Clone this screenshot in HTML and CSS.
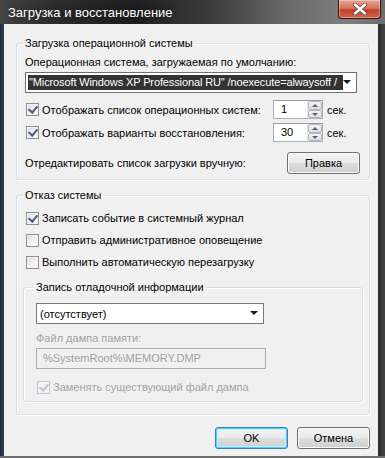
FILE: index.html
```html
<!DOCTYPE html>
<html lang="ru">
<head>
<meta charset="utf-8">
<link rel="stylesheet" href="styles.css">
</head>
<body>
<div class="window">
  <div class="titlebar">
    <span class="title">Загрузка и восстановление</span>
    <div class="close">
      <svg width="16" height="12" viewBox="0 0 16 12"><path d="M3 1.5 L13 10.5 M13 1.5 L3 10.5" stroke="#4a4a5a" stroke-width="4" stroke-linecap="round"/><path d="M3 1.5 L13 10.5 M13 1.5 L3 10.5" stroke="#ffffff" stroke-width="2.4" stroke-linecap="round"/></svg>
    </div>
  </div>
  <div class="client">
    <fieldset class="group g1">
      <legend>Загрузка операционной системы</legend>
      <div class="label">Операционная система, загружаемая по умолчанию:</div>
      <div class="combo wide">
        <span class="sel">"Microsoft Windows XP Professional RU" /noexecute=alwaysoff /</span>
        <span class="arrow"></span>
      </div>
      <div class="row r1">
        <span class="check on"></span><span class="ctext">Отображать список операционных систем:</span>
        <div class="spin"><span class="val">1</span><span class="btns"><i class="up"></i><i class="dn"></i></span></div>
        <span class="unit">сек.</span>
      </div>
      <div class="row r2">
        <span class="check on"></span><span class="ctext">Отображать варианты восстановления:</span>
        <div class="spin"><span class="val">30</span><span class="btns"><i class="up"></i><i class="dn"></i></span></div>
        <span class="unit">сек.</span>
      </div>
      <div class="row r3">
        <span class="ctext">Отредактировать список загрузки вручную:</span>
        <span class="btn edit">Правка</span>
      </div>
    </fieldset>

    <fieldset class="group g2">
      <legend>Отказ системы</legend>
      <div class="row c1"><span class="check on"></span><span class="ctext">Записать событие в системный журнал</span></div>
      <div class="row c2"><span class="check"></span><span class="ctext">Отправить административное оповещение</span></div>
      <div class="row c3"><span class="check"></span><span class="ctext">Выполнить автоматическую перезагрузку</span></div>
      <fieldset class="group g3">
        <legend>Запись отладочной информации</legend>
        <div class="combo small"><span class="plain">(отсутствует)</span><span class="arrow"></span></div>
        <div class="label dis">Файл дампа памяти:</div>
        <div class="textbox">%SystemRoot%\MEMORY.DMP</div>
        <div class="row c4"><span class="check on disabled"></span><span class="ctext dis">Заменять существующий файл дампа</span></div>
      </fieldset>
    </fieldset>

    <div class="buttons">
      <span class="btn ok">OK</span>
      <span class="btn">Отмена</span>
    </div>
  </div>
</div>
</body>
</html>
```

FILE: styles.css
```css
* { box-sizing: border-box; }
html, body { margin: 0; padding: 0; }
body {
  width: 385px; height: 458px; overflow: hidden;
  font-family: "Liberation Sans", Arial, sans-serif;
  font-size: 11px; color: #000;
}
.window {
  width: 385px; height: 458px;
  background: linear-gradient(90deg, #1b2c40 0px, #2a3b4e 3px, #3a3a3a 4px, #3a3a3a 372px, #2b2b2b 378px, #444 385px);
  display: flex; flex-direction: column;
  border-bottom: 2px solid #6e6e6e;
}
.titlebar {
  height: 24px; flex: none;
  display: flex; align-items: flex-start; justify-content: space-between;
  background: linear-gradient(90deg, #454545 0%, #2c2c2c 15%, #1f1f1f 35%, #3c3c3c 55%, #6a6a6a 75%, #7e7e7e 90%, #6c6c6c 100%);
  padding-left: 8px;
}
.title {
  color: #fff; font-size: 13px; line-height: 15px; margin-top: 5px;
  text-shadow: 0 0 6px rgba(0,0,0,0.6);
}
.close {
  width: 43px; height: 19px; margin-right: 4px;
  border: 1px solid #3a1410; border-top: none;
  border-radius: 0 0 4px 4px;
  background: linear-gradient(180deg, #e8a493 0%, #d9735d 45%, #c2412a 55%, #d3624c 100%);
  display: flex; align-items: center; justify-content: center;
  box-shadow: inset 0 0 0 1px rgba(255,255,255,0.35);
}
.client {
  flex: 1;
  margin: 0 7px 0 4px;
  background: #f0f0f0;
  padding: 13px 8px 0 12px;
  display: flex; flex-direction: column;
}
.group {
  margin: 0; min-width: 0;
  border: 1px solid #d5dfe5;
  border-radius: 3px;
  box-shadow: inset 1px 1px 0 #fff, 1px 1px 0 #fff;
  padding: 0 8px 0 8px;
}
.group legend {
  padding: 0 2px; margin-left: -2px;
  line-height: 13px; font-size: 11px;
}
.g1 { height: 143px; padding-top: 5px; }
.g2 { height: 226px; margin-top: 9px; padding-top: 6px; }
.g3 { margin: 11px 0 0 -2px; width: 340px; height: 121px; padding: 3px 0 0 12px; }
.label { line-height: 14px; }
.label.dis, .ctext.dis { color: #a3a3a3; }
.combo {
  position: relative;
  height: 21px;
  border: 1px solid #707070;
  background: #fff;
  display: flex; align-items: center;
  padding: 0 2px;
  overflow: hidden;
}
.combo.wide { width: 332px; margin-top: 3px; }
.combo.small { width: 228px; margin-top: 6px; border-color: #7a7a7a; }
.sel {
  background: #333; color: #fff; white-space: nowrap; overflow: hidden;
  width: 315px; line-height: 15px; padding-left: 1px;
  letter-spacing: -0.12px;
}
.plain { padding-left: 1px; }
.arrow {
  position: absolute; right: 5px; top: 7px;
  width: 0; height: 0;
  border-left: 4px solid transparent; border-right: 4px solid transparent;
  border-top: 4px solid #0f1a33;
}
.row { display: flex; align-items: center; }
.check {
  width: 13px; height: 13px; flex: none;
  border: 1px solid #8e8f8f;
  background: linear-gradient(135deg, #dcdcdc 0%, #f2f2f2 60%, #fbfbfb 100%);
  box-shadow: inset 0 0 0 1px #f4f4f4;
  margin-left: 1px; margin-right: 3px;
  position: relative;
}
.check.on::after {
  content: ""; position: absolute; left: 3px; top: 0px;
  width: 4px; height: 7px;
  border: solid #4a5c8f; border-width: 0 2px 2px 0;
  transform: rotate(40deg);
}
.check.disabled { border-color: #c4c4c4; background: #f4f4f4; }
.check.disabled::after { border-color: #bcc3d4; }
.r1 { margin-top: 7px; height: 19px; }
.r2 { margin-top: 4px; height: 19px; }
.r3 { margin-top: 10px; height: 22px; justify-content: space-between; }
.r1 .ctext, .r2 .ctext { width: 231px; }
.spin {
  width: 50px; height: 19px;
  border: 1px solid #abadb3; border-top-color: #9a9ca3;
  background: #fff;
  display: flex; justify-content: space-between; align-items: stretch;
  padding: 0 0 0 7px;
}
.spin .val { line-height: 17px; }
.btns { width: 15px; display: flex; flex-direction: column; border-left: 1px solid #e4e4e4; }
.btns i {
  flex: 1; display: block; position: relative;
  background: linear-gradient(180deg, #f4f4f4, #dcdcdc);
  border: 1px solid #b5b5b5; border-radius: 2px;
}
.btns i::after {
  content: ""; position: absolute; left: 3px; top: 2px;
  border-left: 3px solid transparent; border-right: 3px solid transparent;
}
.btns i.up::after { border-bottom: 3px solid #4d6185; }
.btns i.dn::after { border-top: 3px solid #4d6185; }
.unit { margin-left: 4px; }
.btn {
  height: 22px; width: 73px;
  display: inline-flex; align-items: center; justify-content: center;
  border: 1px solid #707070; border-radius: 3px;
  background: linear-gradient(180deg, #f2f2f2 0%, #ebebeb 48%, #dddddd 50%, #cfcfcf 100%);
  box-shadow: inset 0 0 0 1px #fcfcfc;
}
.btn.edit { margin-right: 1px; }
.btn.ok { border-color: #3c7fb1; box-shadow: inset 0 0 0 1px #48d5f7, inset 0 0 0 2px #c9eefb; }
.c1 { margin-top: 2px; height: 16px; }
.c2 { margin-top: 6px; height: 16px; }
.c3 { margin-top: 6px; height: 16px; }
.g3 .label { margin-top: 7px; }
.textbox {
  width: 230px; height: 21px; margin-top: 3px;
  border: 1px solid #acacac; background: #f0f0f0;
  color: #a0a0a0; line-height: 19px; padding-left: 6px;
}
.c4 { margin-top: 10px; height: 16px; }
.buttons {
  display: flex; justify-content: flex-end; gap: 9px;
  margin-top: 12px; padding-right: 0;
}
```
